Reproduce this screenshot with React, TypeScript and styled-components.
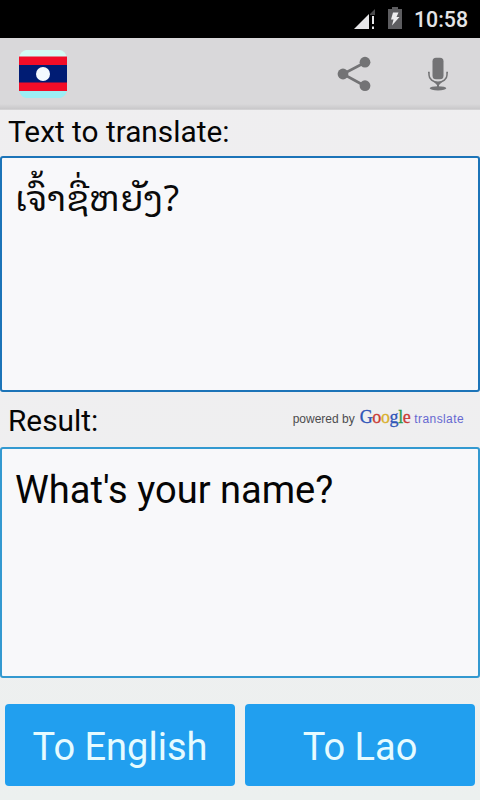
import styled, { createGlobalStyle } from 'styled-components';

const App = () => {
  return (
    <Screen>
      <GlobalStyle />
      <StatusBar>
        <SignalIcon />
        <BatteryIcon />
        <Clock>10:58</Clock>
      </StatusBar>
      <ActionBar>
        <LaoFlag />
        <Actions>
          <ShareIcon />
          <MicIcon />
        </Actions>
      </ActionBar>
      <LabelRow height={46} top={4}>
        <Label>Text to translate:</Label>
      </LabelRow>
      <TextBox height={236} color="#1c74b8">
        <LaoText>ເຈົ້າຊື່ຫຍັງ?</LaoText>
      </TextBox>
      <LabelRow height={55} top={11}>
        <Label>Result:</Label>
        <Attribution>
          <Powered>powered by</Powered>
          <Google>
            <Letter color="#2f55b8">G</Letter>
            <Letter color="#c93a35">o</Letter>
            <Letter color="#d9b02c">o</Letter>
            <Letter color="#2f55b8">g</Letter>
            <Letter color="#2f9a48">l</Letter>
            <Letter color="#c93a35">e</Letter>
          </Google>
          <Translate>translate</Translate>
        </Attribution>
      </LabelRow>
      <TextBox height={231} color="#3399d0">
        <ResultText>What's your name?</ResultText>
      </TextBox>
      <ButtonRow>
        <Button>To English</Button>
        <Button>To Lao</Button>
      </ButtonRow>
    </Screen>
  );
};
export default App;

const SignalIcon = () => (
  <Signal width="22" height="21" viewBox="0 0 22 21">
    <path d="M21 0V6H16V5Z" fill="#4a4a4c" />
    <path d="M0 20L15 5V20Z" fill="#e6e6e8" />
    <path d="M18 7h2v8h-2zM18 17.500h2v2.500h-2z" fill="#e6e6e8" />
  </Signal>
);

const BatteryIcon = () => (
  <Battery width="14" height="22" viewBox="0 0 14 22">
    <path d="M4 0h6v2h4v20H0V2h4z" fill="#5d5d60" />
    <path d="M5 5.500h5.500L8.500 10H11.500L4 18.500L5.500 12.500H3Z" fill="#eeeeef" />
  </Battery>
);

const LaoFlag = () => (
  <svg width="48" height="48" viewBox="0 0 48 48">
    <path d="M7 0H41Q46 1 48 7V9H0V7Q2 1 7 0Z" fill="#d3fbf4" />
    <path d="M0 38H48V41Q46 47 41 48H7Q2 47 0 41Z" fill="#9ceef4" />
    <rect y="6.500" width="48" height="34.500" fill="#f20d28" />
    <rect y="15" width="48" height="17.500" fill="#001c74" />
    <circle cx="24" cy="24" r="7" fill="#f4faff" />
  </svg>
);

const ShareIcon = () => (
  <svg width="34" height="36" viewBox="0 0 34 36">
    <path d="M28 6.500L6 18L28 30" stroke="#737375" strokeWidth="2.600" fill="none" />
    <circle cx="28" cy="6.200" r="5.400" fill="#737375" />
    <circle cx="6" cy="18" r="5.400" fill="#737375" />
    <circle cx="28" cy="29.700" r="5.400" fill="#737375" />
  </svg>
);

const MicIcon = () => (
  <svg width="22" height="34" viewBox="0 0 22 34">
    <rect x="5.500" y="0.700" width="11" height="21.500" rx="3.500" fill="#737375" />
    <path
      d="M1 15.500H2V18C2 22 6 25.300 11 25.300S20 22 20 18V15.500H21"
      stroke="#737375"
      strokeWidth="1.500"
      fill="none"
    />
    <path d="M7 25h8l-3 3v3h-2v-3z" fill="#737375" />
    <ellipse cx="11" cy="31.300" rx="8.300" ry="2.100" fill="#737375" />
  </svg>
);

const GlobalStyle = createGlobalStyle`
  body {
    margin: 0;
    background: #efeff0;
    font-family: Roboto, sans-serif;
  }
  * {
    box-sizing: border-box;
  }
`;
const Screen = styled.div`
  width: 480px;
  height: 800px;
  display: flex;
  flex-direction: column;
  overflow: hidden;
  background: linear-gradient(#efeef0 0%, #efeff0 70%, #ecf0ef 100%);
`;
const StatusBar = styled.div`
  height: 38px;
  flex: none;
  display: flex;
  justify-content: flex-end;
  align-items: flex-start;
  padding-right: 12px;
  background: #000;
`;
const Signal = styled.svg`
  margin: 9px 12px 0 0;
`;
const Battery = styled.svg`
  margin: 7px 12px 0 0;
`;
const Clock = styled.span`
  color: #e4e4e6;
  font-size: 21.3px;
  font-weight: 500;
  line-height: 40px;
`;
const ActionBar = styled.div`
  height: 72px;
  flex: none;
  display: flex;
  align-items: center;
  justify-content: space-between;
  padding: 0 31px 0 19px;
  background: linear-gradient(#d9d8da 0, #d9d8da 66px, #c9c8ca 71px, #dddcde 72px);
`;
const Actions = styled.div`
  display: flex;
  align-items: center;
  gap: 56px;
`;
const LabelRow = styled.div<{ height: number; top: number }>`
  height: ${props => props.height}px;
  flex: none;
  display: flex;
  align-items: flex-start;
  justify-content: space-between;
  padding: ${props => props.top}px 16px 0 8px;
`;
const Label = styled.span`
  color: #050505;
  font-size: 29.8px;
  line-height: 36px;
`;
const TextBox = styled.div<{ height: number }>`
  height: ${props => props.height}px;
  flex: none;
  padding: 18px 13px;
  background: #f8f8fa;
  border: 2px solid ${props => props.color};
  border-radius: 3px;
`;
const LaoText = styled.div`
  color: #0a0a0a;
  font-family: 'Noto Sans Lao Looped', 'Noto Sans Lao', 'Noto Sans', sans-serif;
  font-size: 36px;
  line-height: 38px;
`;
const ResultText = styled.div`
  color: #050505;
  font-size: 38.1px;
  line-height: 46px;
`;
const Attribution = styled.div`
  display: flex;
  align-items: baseline;
  padding-top: 4px;
  line-height: 20px;
`;
const Powered = styled.span`
  color: #4c4c4e;
  font-family: 'Liberation Sans', Arial, sans-serif;
  font-size: 12px;
  margin-right: 5px;
`;
const Google = styled.span`
  font-family: 'Liberation Serif', serif;
  font-size: 18px;
  letter-spacing: -0.4px;
  margin-right: 4px;
`;
const Letter = styled.span`
  color: ${props => props.color};
  -webkit-text-stroke: 0.3px ${props => props.color};
`;
const Translate = styled.span`
  color: #6668d0;
  font-family: 'Liberation Sans', Arial, sans-serif;
  font-size: 12px;
  letter-spacing: 0.4px;
`;
const ButtonRow = styled.div`
  flex: 1;
  display: flex;
  gap: 10px;
  padding: 26px 5px 14px;
`;
const Button = styled.button`
  flex: 1;
  border: none;
  border-radius: 4px;
  padding: 3px 0 0;
  background: #219fef;
  color: #e6fbff;
  font-family: Roboto, sans-serif;
  font-size: 38px;
  cursor: pointer;
`;
